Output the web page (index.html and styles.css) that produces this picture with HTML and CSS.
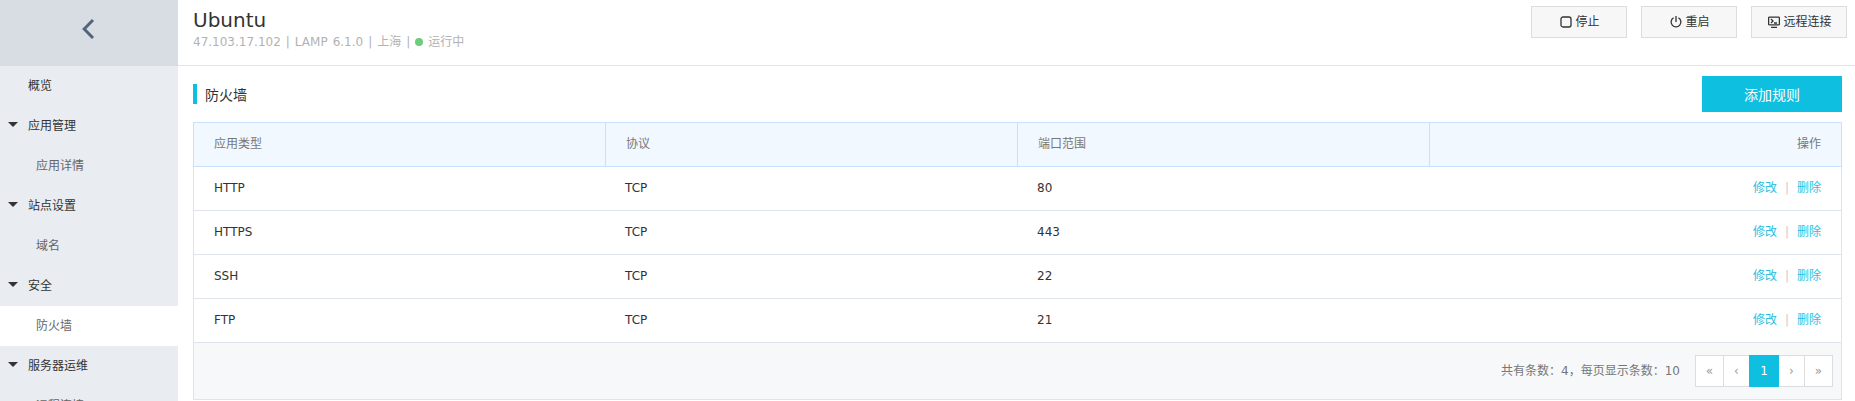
FILE: index.html
```html
<!DOCTYPE html>
<html lang="zh-CN">
<head>
<meta charset="utf-8">
<title>防火墙</title>
<link rel="stylesheet" href="styles.css">
</head>
<body>
<div class="app">
  <aside class="sidebar">
    <a class="back"><svg width="14" height="22" viewBox="0 0 14 22"><path d="M12 2 3.2 11 12 20" fill="none" stroke="#546478" stroke-width="3"/></svg></a>
    <nav class="menu">
      <a class="item group">概览</a>
      <a class="item group open">应用管理</a>
      <a class="item sub">应用详情</a>
      <a class="item group open">站点设置</a>
      <a class="item sub">域名</a>
      <a class="item group open">安全</a>
      <a class="item sub active">防火墙</a>
      <a class="item group open">服务器运维</a>
      <a class="item sub">远程连接</a>
    </nav>
  </aside>
  <main class="main">
    <header class="header">
      <div class="server">
        <h1 class="name">Ubuntu</h1>
        <p class="meta"><span>47.103.17.102 | LAMP 6.1.0 | 上海 |</span><i class="dot"></i><span>运行中</span></p>
      </div>
      <div class="actions">
        <button class="btn"><svg class="icon" width="12" height="12" viewBox="0 0 12 12"><rect x="1" y="1" width="10" height="10" rx="2"/></svg>停止</button>
        <button class="btn"><svg class="icon" width="12" height="12" viewBox="0 0 12 12"><path d="M6 0v6M3.6 1.7a4.9 4.9 0 1 0 4.8 0"/></svg>重启</button>
        <button class="btn"><svg class="icon" width="12" height="12" viewBox="0 0 12 12"><rect x=".6" y="1.1" width="10.8" height="7.8" rx="1"/><path d="M3 3l2 2-2 2M6 7h3M3 11.5h6"/></svg>远程连接</button>
      </div>
    </header>
    <section class="content">
      <div class="title-row">
        <h2 class="title">防火墙</h2>
        <button class="add">添加规则</button>
      </div>
      <div class="table">
        <div class="row head"><div>应用类型</div><div>协议</div><div>端口范围</div><div class="ops">操作</div></div>
        <div class="row"><div>HTTP</div><div>TCP</div><div>80</div><div class="ops"><a>修改</a><i>|</i><a>删除</a></div></div>
        <div class="row"><div>HTTPS</div><div>TCP</div><div>443</div><div class="ops"><a>修改</a><i>|</i><a>删除</a></div></div>
        <div class="row"><div>SSH</div><div>TCP</div><div>22</div><div class="ops"><a>修改</a><i>|</i><a>删除</a></div></div>
        <div class="row"><div>FTP</div><div>TCP</div><div>21</div><div class="ops"><a>修改</a><i>|</i><a>删除</a></div></div>
        <div class="foot">
          <span class="total">共有条数：4，每页显示条数：10</span>
          <div class="pager"><a class="end">«</a><a>‹</a><a class="current">1</a><a>›</a><a class="end">»</a></div>
        </div>
      </div>
    </section>
  </main>
</div>
</body>
</html>
```
FILE: styles.css
```css
* { box-sizing: border-box; }
body {
  margin: 0;
  font: 12px/18px "DejaVu Sans", "Noto Sans CJK SC", sans-serif;
  color: #333;
  background: #fff;
}
h1, h2, p { margin: 0; font-weight: normal; }
i { font-style: normal; }
button { font: inherit; color: inherit; padding: 0; }
.app { display: flex; height: 401px; overflow: hidden; }

.sidebar { width: 178px; flex: none; background: #e9ecf0; }
.back {
  height: 66px;
  display: flex;
  justify-content: center;
  padding: 18px 2px 0 0;
  background: #d8dce3;
}
.item { display: flex; align-items: center; height: 40px; padding-bottom: 1px; }
.group { padding-left: 28px; }
.open { padding-left: 8px; }
.open::before {
  content: "";
  border: 5px solid transparent;
  border-top-color: #333;
  border-bottom: 0;
  margin: 0 10px 2px 0;
}
.sub { padding-left: 36px; color: #666; }
.active { background: #fff; }

.main { flex: 1; min-width: 0; }
.header {
  height: 66px;
  border-bottom: 1px solid #e5e5e5;
  display: flex;
  justify-content: space-between;
  padding: 6px 8px 0 15px;
}
.name { font-size: 20px; line-height: 28px; }
.meta { display: flex; align-items: center; color: #b2b2b2; line-height: 16px; word-spacing: 1.2px; }
.dot { width: 8px; height: 8px; border-radius: 50%; background: #6ccd7c; margin: 0 5px; }
.actions { display: flex; gap: 14px; }
.btn {
  width: 96px;
  height: 32px;
  display: flex;
  align-items: center;
  justify-content: center;
  gap: 3px;
  padding-left: 2px;
  border: 1px solid #ddd;
  background: #f7f7f7;
}
.icon { fill: none; stroke: #333; stroke-width: 1.3; }

.content { padding: 10px 13px 0 15px; }
.title-row { display: flex; justify-content: space-between; height: 46px; }
.title {
  height: 20px;
  margin-top: 8px;
  padding-left: 8px;
  border-left: 4px solid #0fbfdf;
  font-size: 14px;
  line-height: 23px;
}
.add { width: 140px; height: 36px; border: 0; background: #0fbfdf; color: #fff; font-size: 14px; padding-top: 1px; }

.table { border: 1px solid #dfe4ea; border-top: 0; }
.row {
  display: grid;
  grid-template-columns: 411px 412px 412px 1fr;
  height: 44px;
  border-bottom: 1px solid #dfe4ea;
}
.row > div { display: flex; align-items: center; padding: 0 20px 1px; }
.head {
  height: 45px;
  margin: 0 -1px;
  border: 1px solid #c8e1fc;
  background: #f1f8ff;
  color: #777;
}
.head > div + div { border-left: 1px solid #c8e1fc; }
.row > .ops { justify-content: flex-end; border-left-color: #c8e1fc; }
.ops a { color: #28bfdf; }
.ops i { color: #ccc; margin: 0 8px; }
.foot {
  height: 56px;
  background: #f6f8fa;
  display: flex;
  align-items: center;
  justify-content: flex-end;
  gap: 16px;
  padding-right: 8px;
  color: #777;
}
.pager { display: flex; }
.pager a {
  width: 27px;
  height: 32px;
  display: flex;
  align-items: center;
  justify-content: center;
  margin-left: -1px;
  border: 1px solid #ddd;
  background: #fff;
  color: #999;
}
.pager .end { width: 29px; }
.pager .current { width: 30px; z-index: 1; background: #0fbfdf; border-color: #0fbfdf; color: #fff; }
```
